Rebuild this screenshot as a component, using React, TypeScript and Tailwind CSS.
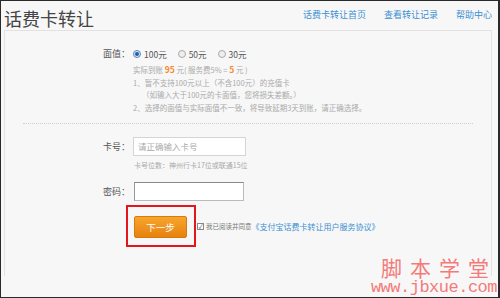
const font = "font-['Microsoft_YaHei','Noto_Sans_CJK_SC',sans-serif]"

function Radio({ checked, label }: { checked?: boolean; label: string }) {
  return (
    <label className="flex items-center gap-[3px]">
      <span
        className={`w-[8px] h-[8px] rounded-full border flex items-center justify-center ${
          checked ? 'border-[#5a86b8] bg-[#dbe8f5]' : 'border-[#aaa] bg-[#eee]'
        }`}
      >
        {checked && <span className="w-[4px] h-[4px] rounded-full bg-[#1f5fa8]" />}
      </span>
      <span>{label}</span>
    </label>
  )
}

export default function App() {
  return (
    <div className={`relative w-[500px] h-[298px] overflow-hidden bg-[#f7f7f7] border-y border-l border-r-[2px] border-[#2a2a2a] ${font}`}>
      {/* Header */}
      <div className="flex items-end justify-between h-[29px] pl-[3px] pr-[6px]">
        <h1 className="text-[18px] leading-none text-[#444] pb-[3px]">话费卡转让</h1>
        <div className="flex gap-[18px] text-[9px] text-[#3b8fd2] pb-[9px]">
          <span>话费卡转让首页</span>
          <span>查看转让记录</span>
          <span>帮助中心</span>
        </div>
      </div>

      {/* Panel */}
      <div className="ml-[3px] mr-[6px] h-[246px] border border-b-0 border-[#e2e2e2] text-[9px] text-[#555]">
        <div className="flex pt-[17px]">
          <div className="w-[125px] text-right leading-[12px]">面值：</div>
          <div className="ml-[3px]">
            <div className="flex gap-[11px] h-[12px] items-center text-[8.5px]">
              <Radio checked label="100元" />
              <Radio label="50元" />
              <Radio label="30元" />
            </div>
            <div className="mt-[3px] text-[7.5px] leading-[12.5px] text-[#aaa]">
              <div>
                实际到账 <span className="text-[#f7892b] font-bold text-[8.5px]">95</span> 元( 服务费5% ={' '}
                <span className="text-[#f7892b] font-bold text-[8.5px]">5</span> 元 )
              </div>
              <div>1、暂不支持100元以上（不含100元）的充值卡</div>
              <div className="pl-[9px]">（如输入大于100元的卡面值，您将损失差额。）</div>
              <div>2、选择的面值与实际面值不一致，将导致延期3天到账，请正确选择。</div>
            </div>
          </div>
        </div>

        <div className="mx-[18px] mt-[9px] border-t border-dotted border-[#cfcfcf]" />

        <div className="flex mt-[13px]">
          <div className="w-[125px] text-right leading-[19px]">卡号：</div>
          <div className="ml-[3px]">
            <div className="w-[113px] h-[19px] border border-[#d5d5d5] bg-white text-[8.5px] text-[#aaa] leading-[17px] pl-[4px]">
              请正确输入卡号
            </div>
            <div className="mt-[4px] text-[7px] leading-[10px] text-[#aaa] pl-[1px]">卡号位数：神州行卡17位或联通15位</div>
          </div>
        </div>

        <div className="flex mt-[12px]">
          <div className="w-[125px] text-right leading-[19px]">密码：</div>
          <div className="ml-[4px] w-[110px] h-[19px] border border-[#bbb] border-t-[#888] border-l-[#999] bg-white" />
        </div>

        <div className="flex items-center mt-[4px] pl-[121px]">
          <div className="border-[2px] border-[#e3161b] w-[70px] h-[42px] flex items-center pl-[6px]">
            <button className="mt-[2px] w-[53px] h-[22px] rounded-[2px] bg-gradient-to-b from-[#f6a52d] to-[#e8820c] border border-[#d97a0c] text-white text-[9.5px]">
              下一步
            </button>
          </div>
          <div className="flex items-center ml-[1px] mt-[1px]">
            <span className="w-[7px] h-[7px] border border-[#888] bg-white flex items-center justify-center text-[6px] leading-none text-[#345]">✓</span>
            <span className="ml-[2px] text-[6.5px] text-[#777]">我已阅读并同意</span>
            <span className="text-[8px] text-[#3b8fd2]">《支付宝话费卡转让用户服务协议》</span>
          </div>
        </div>
      </div>

      {/* Watermark */}
      <div className="absolute right-[1px] top-[259px] text-[#f47a7a] text-right font-['Liberation_Mono','Noto_Sans_CJK_SC',monospace]">
        <div className="text-[21px] leading-[21px] tracking-[8px]">脚本学堂</div>
        <div className="text-[17px] leading-[14px] -tracking-[0.5px]">www.jbxue.com</div>
      </div>
    </div>
  )
}
